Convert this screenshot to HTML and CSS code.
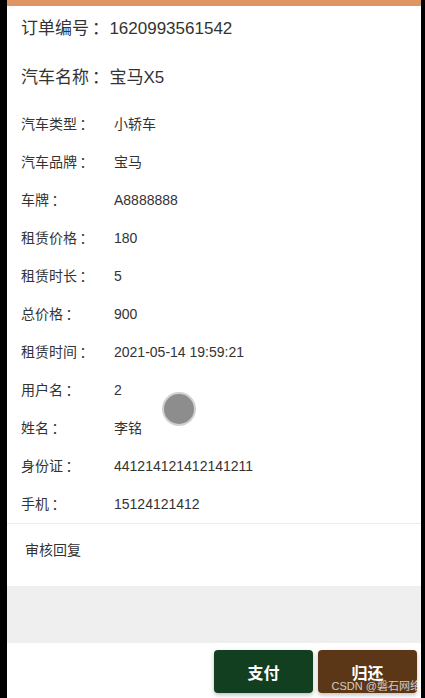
FILE: index.html
```html
<!DOCTYPE html>
<html lang="zh-CN">
<head>
    <meta charset="UTF-8">
    <meta name="viewport" content="width=device-width, initial-scale=1.0">
    <title>订单详情</title>
    <link rel="stylesheet" href="styles.css">
</head>
<body>
    <div class="page">
        <div class="top-bar"></div>

        <div class="title first">订单编号<span class="colon">：</span>1620993561542</div>
        <div class="title second">汽车名称<span class="colon">：</span>宝马X5</div>

        <div class="info-list">
            <div class="info-row"><span class="label">汽车类型<span class="colon">：</span></span><span class="value">小轿车</span></div>
            <div class="info-row"><span class="label">汽车品牌<span class="colon">：</span></span><span class="value">宝马</span></div>
            <div class="info-row"><span class="label">车牌<span class="colon">：</span></span><span class="value">A8888888</span></div>
            <div class="info-row"><span class="label">租赁价格<span class="colon">：</span></span><span class="value">180</span></div>
            <div class="info-row"><span class="label">租赁时长<span class="colon">：</span></span><span class="value">5</span></div>
            <div class="info-row"><span class="label">总价格<span class="colon">：</span></span><span class="value">900</span></div>
            <div class="info-row"><span class="label">租赁时间<span class="colon">：</span></span><span class="value">2021-05-14 19:59:21</span></div>
            <div class="info-row"><span class="label">用户名<span class="colon">：</span></span><span class="value">2</span></div>
            <div class="info-row"><span class="label">姓名<span class="colon">：</span></span><span class="value">李铭</span></div>
            <div class="info-row"><span class="label">身份证<span class="colon">：</span></span><span class="value">441214121412141211</span></div>
            <div class="info-row"><span class="label">手机<span class="colon">：</span></span><span class="value">15124121412</span></div>
        </div>

        <div class="reply">审核回复</div>

        <div class="gap"></div>

        <div class="footer">
            <button class="btn pay">支付</button>
            <button class="btn return">归还</button>
        </div>

        <div class="touch-dot"></div>
        <div class="watermark">CSDN @磐石网络</div>
    </div>
</body>
</html>
```

FILE: styles.css
```css
html, body {
    margin: 0;
    padding: 0;
}
body {
    background: #000;
    font-family: "Liberation Sans", "Noto Sans CJK SC", sans-serif;
    color: #333;
}
.page {
    position: relative;
    margin: 0 4px 0 7px;
    height: 698px;
    background: #fff;
    overflow: hidden;
}
.top-bar {
    height: 6px;
    background: #de9562;
}
/* 冒号居中，与原页面字体一致 */
.colon {
    display: inline-block;
    width: 1.2em;
    text-indent: 0.18em;
}
.title {
    font-size: 17px;
    line-height: 24px;
    height: 24px;
    padding-left: 14px;
}
.title.first {
    margin-top: 11px;
}
.title.second {
    margin-top: 25px;
}
.info-list {
    margin-top: 15px;
    border-bottom: 1px solid #ececec;
}
.info-row {
    display: flex;
    font-size: 14px;
    line-height: 38px;
    height: 38px;
    padding-left: 14px;
}
.label {
    width: 93px;
    flex-shrink: 0;
}
.reply {
    font-size: 14px;
    line-height: 20px;
    padding: 16px 0 0 18px;
    height: 46px;
}
.gap {
    height: 57px;
    background: #efefef;
}
.footer {
    display: flex;
    justify-content: flex-end;
    gap: 5px;
    padding: 7px 4px 0 0;
}
.btn {
    width: 99px;
    height: 43px;
    border: none;
    border-radius: 4px;
    color: #fff;
    font-family: "Noto Sans CJK SC", sans-serif;
    font-size: 16px;
    font-weight: bold;
    box-shadow: 0 2px 4px rgba(0,0,0,0.25);
}
.pay {
    background: #113f1f;
}
.return {
    background: #5b3718;
}
.touch-dot {
    position: absolute;
    left: 157px;
    top: 394px;
    width: 30px;
    height: 30px;
    border-radius: 50%;
    background: #8d8d8d;
    box-shadow: 0 0 0 2px rgba(150,150,150,0.45);
}
.watermark {
    position: absolute;
    right: 0;
    bottom: 5px;
    font-size: 11px;
    color: rgba(255,255,255,0.75);
    font-family: "Liberation Sans", "Noto Sans CJK SC", sans-serif;
}
```
